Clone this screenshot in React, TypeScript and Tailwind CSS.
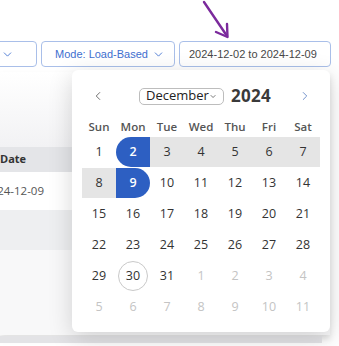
import React from 'react';
import { ChevronDown, ChevronLeft, ChevronRight } from 'lucide-react';

type Day = { n: number; muted?: boolean };

const weeks: Day[][] = [
    [1, 2, 3, 4, 5, 6, 7].map((n) => ({ n })),
    [8, 9, 10, 11, 12, 13, 14].map((n) => ({ n })),
    [15, 16, 17, 18, 19, 20, 21].map((n) => ({ n })),
    [22, 23, 24, 25, 26, 27, 28].map((n) => ({ n })),
    [{ n: 29 }, { n: 30 }, { n: 31 }, { n: 1, muted: true }, { n: 2, muted: true }, { n: 3, muted: true }, { n: 4, muted: true }],
    [5, 6, 7, 8, 9, 10, 11].map((n) => ({ n, muted: true })),
];

const dayNames = ['Sun', 'Mon', 'Tue', 'Wed', 'Thu', 'Fri', 'Sat'];

const cellClass = (w: number, d: number) => {
    // range 2024-12-02 .. 2024-12-09
    if (w === 0 && d === 1) return 'bg-[#2d5fc2] text-white font-semibold rounded-l-full';
    if (w === 1 && d === 1) return 'bg-[#2d5fc2] text-white font-semibold rounded-r-full';
    if ((w === 0 && d > 1) || (w === 1 && d === 0)) return 'bg-[#e5e5e5] text-[#333]';
    return '';
};

const App: React.FC = () => {
    return (
        <div className="relative w-[339px] h-[346px] overflow-hidden bg-white font-['Liberation_Sans',Arial,sans-serif]">
            {/* pointer arrow */}
            <svg className="absolute left-[196px] top-0" width="40" height="42" viewBox="0 0 40 42">
                <line x1="8" y1="2" x2="31" y2="36" stroke="#7b2a9c" strokeWidth="2.4" strokeLinecap="round" />
                <path d="M20 32 L31.5 37 L31 24" fill="none" stroke="#7b2a9c" strokeWidth="2.4" strokeLinecap="round" strokeLinejoin="round" />
            </svg>

            {/* filter bar */}
            <div className="flex gap-[4px] pt-[41px] ml-[-44px] whitespace-nowrap">
                <button className="shrink-0 flex items-center justify-end w-[81px] h-[26px] pr-[22px] rounded-[4px] border border-[#a9bfe9] text-[#3e6fd0]">
                    <ChevronDown size={13} strokeWidth={1.6} />
                </button>
                <button className="shrink-0 flex items-center gap-[4px] w-[134px] h-[26px] pl-[13px] rounded-[4px] border border-[#a9bfe9] text-[#3e6fd0] text-[11px]">
                    Mode: Load-Based
                    <ChevronDown size={13} strokeWidth={1.6} className="shrink-0" />
                </button>
                <div className="shrink-0 flex items-center w-[152px] h-[26px] pl-[9px] rounded-[4px] border border-[#a9bfe9] text-[#474747] text-[11px]">
                    2024-12-02 to 2024-12-09
                </div>
            </div>

            {/* table behind the picker */}
            <div className="mt-[5px] w-[330px] h-[263px] flex flex-col bg-[#f7f7f8] shadow-[0_4px_6px_rgba(0,0,0,0.12)] font-['Open_Sans',sans-serif]">
                <div className="h-[75px] bg-gradient-to-b from-white to-[#f2f2f4]" />
                <div className="h-[25px] flex items-center bg-[#e4e5e8] text-[11px] font-bold text-[#333]">Date</div>
                <div className="h-[38px] flex items-center bg-white text-[11.5px] text-[#555] ml-[-16px]">2024-12-09</div>
                <div className="h-[40px] bg-[#eeeff1]" />
                <div className="flex-1 bg-[#f8f8f9]" />
            </div>
            <div className="mt-[1px] w-[322px] h-[7px] bg-[#e3e3e6]" />

            {/* date picker popup */}
            <div className="absolute left-[72px] top-[70px] w-[258px] h-[262px] px-[10px] bg-white rounded-[6px] shadow-[0_6px_24px_rgba(0,0,0,0.16)] font-['Open_Sans',sans-serif]">
                <div className="flex items-center h-[24px] mt-[14px]">
                    <ChevronLeft size={14} strokeWidth={1.6} className="ml-[9px] text-[#666]" />
                    <div className="ml-[34px] flex items-center justify-between w-[85px] h-[17px] px-[6px] rounded-[5px] border border-[#bdbdbd] text-[13px] text-[#222]">
                        December
                        <ChevronDown size={11} strokeWidth={1.8} />
                    </div>
                    <span className="ml-[7px] text-[17px] font-bold text-[#3a3a3a] tracking-[0.3px]">2024</span>
                    <ChevronRight size={14} strokeWidth={1.6} className="ml-auto mr-[8px] text-[#6a8cc9]" />
                </div>

                <div className="grid grid-cols-7 mt-[10px] h-[16px] items-center text-[11.5px] font-semibold text-[#555]">
                    {dayNames.map((d) => (
                        <div key={d} className="text-center">{d}</div>
                    ))}
                </div>

                <div className="mt-[3px] flex flex-col gap-[1px]">
                    {weeks.map((week, w) => (
                        <div key={w} className="grid grid-cols-7">
                            {week.map((day, d) => {
                                const isToday = w === 4 && d === 1;
                                return (
                                    <div
                                        key={d}
                                        className={`h-[30px] flex items-center justify-center text-[12.5px] ${day.muted ? 'text-[#c4c4c4]' : 'text-[#333]'} ${cellClass(w, d)}`}
                                    >
                                        {isToday ? (
                                            <span className="w-[30px] h-[30px] flex items-center justify-center rounded-full border border-[#c9c9c9]">
                                                {day.n}
                                            </span>
                                        ) : (
                                            day.n
                                        )}
                                    </div>
                                );
                            })}
                        </div>
                    ))}
                </div>
            </div>
        </div>
    );
};

export default App;
